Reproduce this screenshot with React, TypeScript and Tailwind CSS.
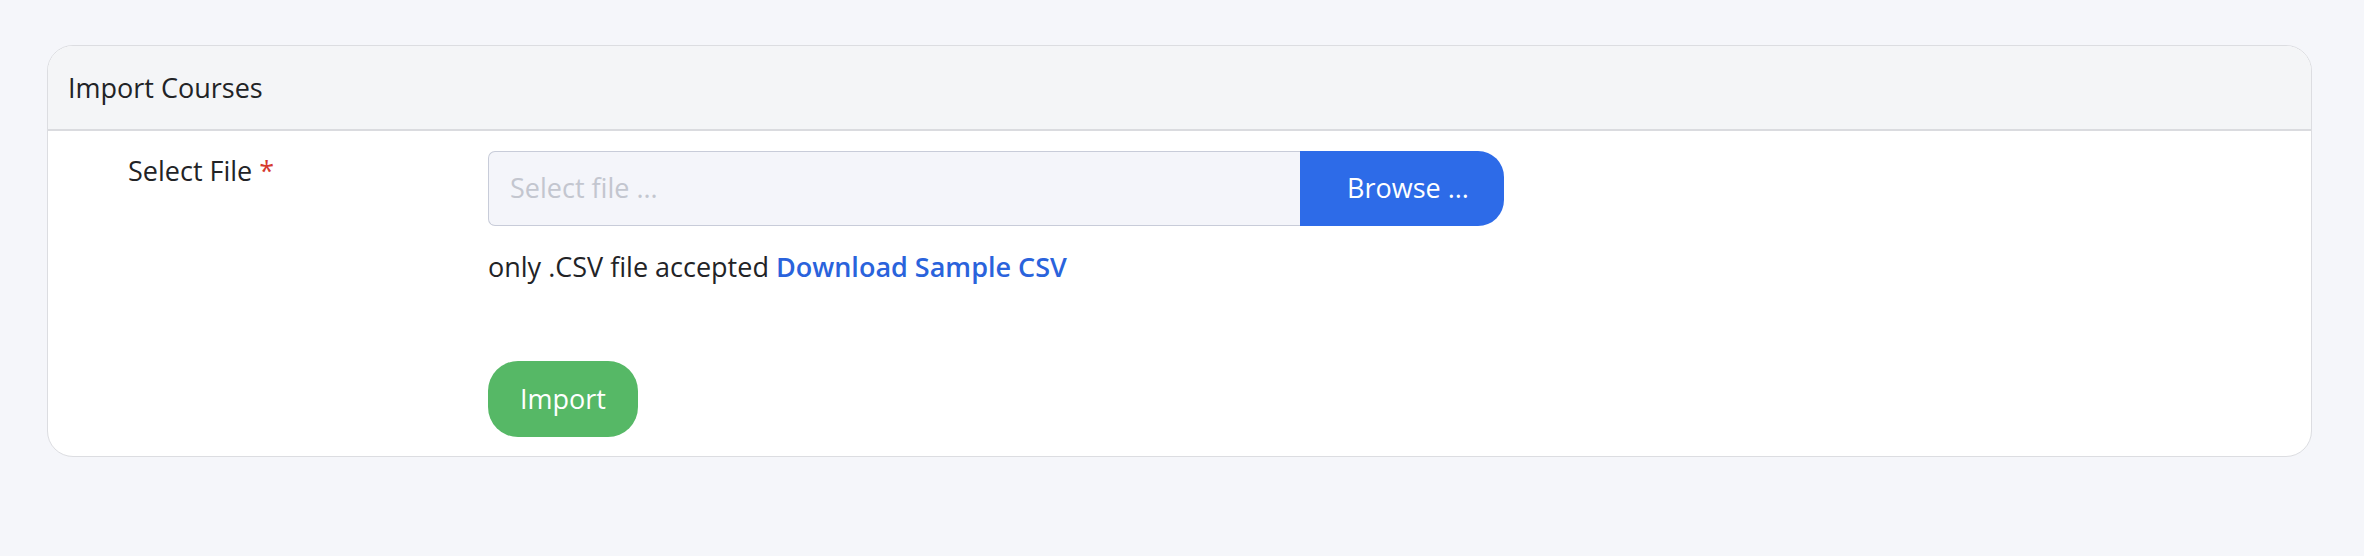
import React from "react";

export default function App() {
  return (
    <div className="min-h-[556px] w-full bg-[#f5f6fa] pt-[45px] pl-[47px] pr-[52px] font-['Open_Sans',sans-serif] text-[27px] text-[#222326]">
      <div className="overflow-hidden rounded-[26px] border border-[#dcdde1] bg-white">
        <div className="flex h-[85px] items-center border-b-2 border-[#dadbdf] bg-[#f4f5f7] pl-[20px] leading-[40px]">
          Import Courses
        </div>
        <div className="flex pt-[20px] pb-[19px]">
          <div className="w-[440px] shrink-0 pl-[80px] leading-[40px]">
            Select File <span className="text-[#d63a2f]">*</span>
          </div>
          <div className="flex flex-col">
            <div className="flex h-[75px] w-[1016px]">
              <div className="flex flex-1 items-center rounded-l-[7px] border border-r-0 border-[#c8ccd9] bg-[#f4f5fa] pl-[21px] text-[#c3c6cf]">
                Select file ...
              </div>
              <button className="flex h-full w-[204px] items-center rounded-r-[26px] bg-[#2d6be8] pl-[47px] font-medium text-white">
                Browse ...
              </button>
            </div>
            <div className="mt-[21px] leading-[40px]">
              only .CSV file accepted{" "}
              <a className="font-semibold text-[#2a63dc]" href="#">
                Download Sample CSV
              </a>
            </div>
            <div className="mt-[74px]">
              <button className="flex h-[76px] w-[150px] items-center justify-center rounded-[30px] bg-[#56b866] font-medium text-white">
                Import
              </button>
            </div>
          </div>
        </div>
      </div>
    </div>
  );
}
